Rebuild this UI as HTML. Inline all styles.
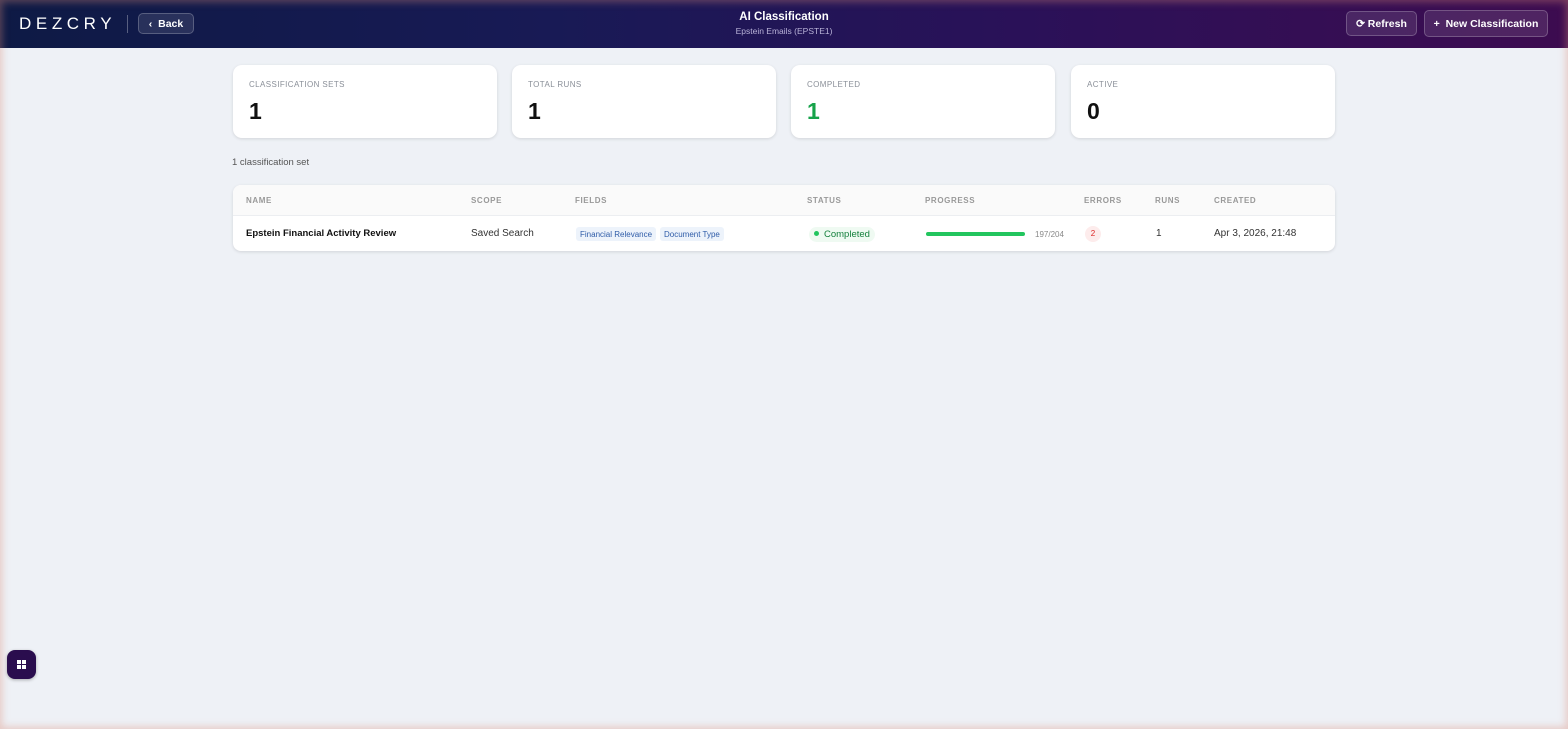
<!DOCTYPE html>
<html><head><meta charset="utf-8"><style>
*{box-sizing:border-box;margin:0;padding:0}
body{width:1568px;height:729px;overflow:hidden;background:#eef1f6;font-family:"Liberation Sans",sans-serif;position:relative}
.vig{position:absolute;inset:0;pointer-events:none;box-shadow:inset 0 0 8px 2px rgba(220,140,120,.4);z-index:10}
.hdr{position:absolute;left:0;top:0;width:1568px;height:48px;background:linear-gradient(90deg,#0e1a45 0%,#181a55 35%,#2a1158 65%,#3d0c50 100%)}
.logo{position:absolute;left:19px;top:14px;color:#fff;font-size:17px;letter-spacing:4.6px;font-weight:300}
.sep{position:absolute;left:127px;top:15px;width:1px;height:18px;background:rgba(255,255,255,.3)}
.btn{position:absolute;border:1px solid rgba(255,255,255,.22);background:rgba(255,255,255,.1);color:#fff;font-size:10.5px;font-weight:bold;border-radius:5px;display:flex;align-items:center;justify-content:center}
.title{position:absolute;left:0;width:1568px;text-align:center;color:#fff}
.card{position:absolute;top:65px;width:264px;height:73px;background:#fff;border-radius:9px;box-shadow:0 1px 3px rgba(0,0,0,.12)}
.card .l{position:absolute;left:16px;top:15px;font-size:8px;letter-spacing:.4px;color:#8a8f98}
.card .v{position:absolute;left:16px;top:33px;font-size:23px;font-weight:bold;color:#111}
.tbl{position:absolute;left:233px;top:185px;width:1102px;height:66px;background:#fff;border-radius:8px;box-shadow:0 1px 3px rgba(0,0,0,.12);overflow:hidden}
.th{position:absolute;top:0;left:0;width:100%;height:31px;background:#fafafa;border-bottom:1px solid #eceef1}
.th span{position:absolute;top:11px;font-size:8px;letter-spacing:.6px;color:#999;font-weight:bold}
.td{position:absolute;top:43px;font-size:10px;color:#333}
.tag{position:absolute;top:42px;height:14px;font-size:8px;color:#2f5ca8;background:#edf3fb;border-radius:3px;padding:3px 4px 0}
</style></head><body>
<div class="hdr">
<div class="logo">DEZCRY</div><div class="sep"></div>
<div class="btn" style="left:138px;top:13px;width:56px;height:21px">‹&nbsp;&nbsp;Back</div>
<div class="title" style="top:11px;font-size:11.5px;font-weight:bold">AI Classification</div>
<div class="title" style="top:26px;font-size:8.5px;color:#b9b3d8">Epstein Emails (EPSTE1)</div>
<div class="btn" style="left:1346px;top:11px;width:71px;height:25px">⟳&nbsp;Refresh</div>
<div class="btn" style="left:1424px;top:10px;width:124px;height:27px">+&nbsp;&nbsp;New Classification</div>
</div>
<div class="card" style="left:233px"><div class="l">CLASSIFICATION SETS</div><div class="v">1</div></div>
<div class="card" style="left:512px"><div class="l">TOTAL RUNS</div><div class="v">1</div></div>
<div class="card" style="left:791px"><div class="l">COMPLETED</div><div class="v" style="color:#16a34a">1</div></div>
<div class="card" style="left:1071px"><div class="l">ACTIVE</div><div class="v">0</div></div>
<div style="position:absolute;left:232px;top:157px;font-size:9.5px;color:#555">1 classification set</div>
<div class="tbl">
<div class="th"><span style="left:13px">NAME</span><span style="left:238px">SCOPE</span><span style="left:342px">FIELDS</span><span style="left:574px">STATUS</span><span style="left:692px">PROGRESS</span><span style="left:851px">ERRORS</span><span style="left:922px">RUNS</span><span style="left:981px">CREATED</span></div>
<div class="td" style="left:13px;font-weight:bold;color:#111;font-size:9.5px">Epstein Financial Activity Review</div>
<div class="td" style="left:238px">Saved Search</div>
<div class="tag" style="left:343px">Financial Relevance</div>
<div class="tag" style="left:427px">Document Type</div>
<div style="position:absolute;left:576px;top:42px;height:15px;padding:2px 5px 0 5px;background:#effaf2;border-radius:8px;font-size:9.5px;color:#15803d"><span style="display:inline-block;width:5px;height:5px;border-radius:50%;background:#22c55e;margin-right:5px;vertical-align:1px"></span>Completed</div>
<div style="position:absolute;left:693px;top:47px;width:99px;height:4px;background:#22c55e;border-radius:2px"></div>
<div class="td" style="left:802px;top:45px;font-size:8px;color:#888">197/204</div>
<div style="position:absolute;left:852px;top:41px;width:16px;height:16px;border-radius:50%;background:#fdecec;color:#dc2626;font-size:8px;text-align:center;line-height:16px">2</div>
<div class="td" style="left:923px">1</div>
<div class="td" style="left:981px">Apr 3, 2026, 21:48</div>
</div>
<div style="position:absolute;left:7px;top:650px;width:29px;height:29px;border-radius:8px;background:#2a0d4e;box-shadow:0 1px 3px rgba(0,0,0,.3)">
<div style="position:absolute;left:10px;top:10px;width:4px;height:4px;background:#fff"></div><div style="position:absolute;left:15px;top:10px;width:4px;height:4px;background:#fff"></div><div style="position:absolute;left:10px;top:15px;width:4px;height:4px;background:#fff"></div><div style="position:absolute;left:15px;top:15px;width:4px;height:4px;background:#fff"></div>
</div>
<div class="vig"></div>
</body></html>
